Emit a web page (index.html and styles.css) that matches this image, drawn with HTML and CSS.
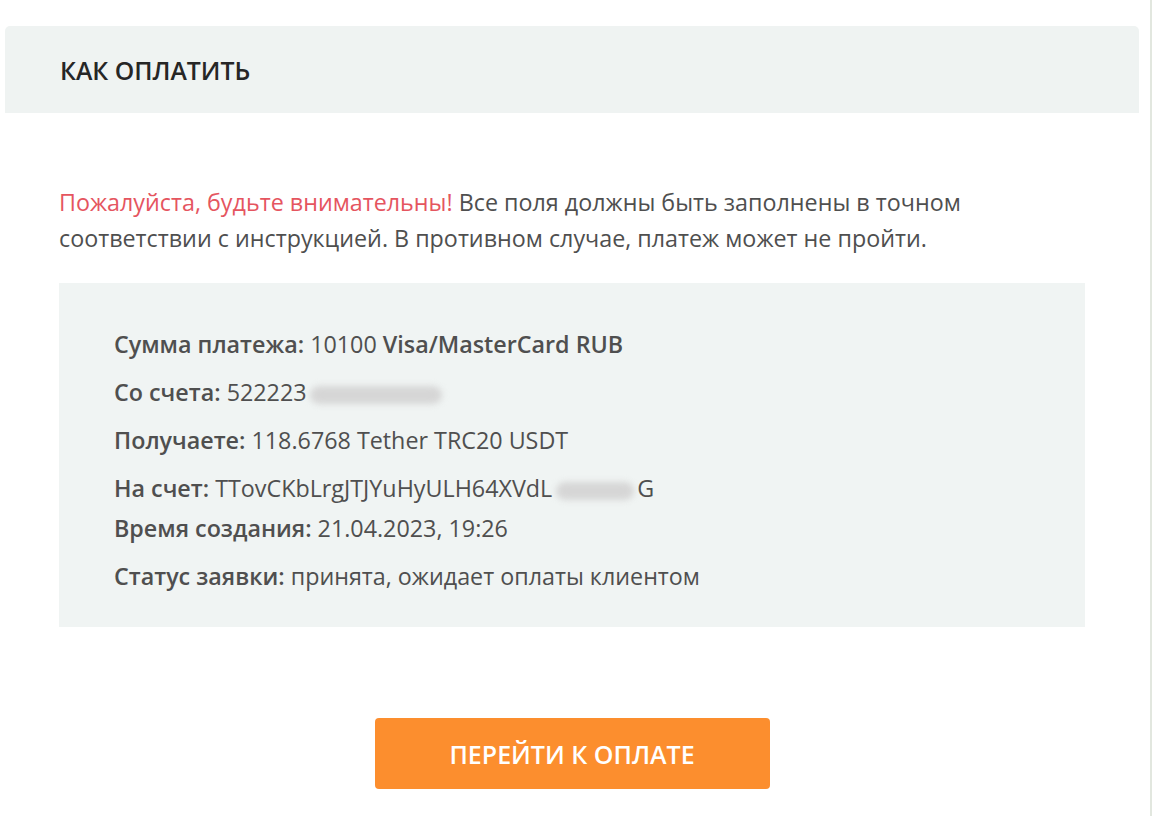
FILE: index.html
```html
<!DOCTYPE html>
<html lang="ru">
<head>
<meta charset="utf-8">
<title>Как оплатить</title>
<link rel="stylesheet" href="styles.css">
</head>
<body>
<div class="page">
  <div class="content">
    <div class="panel-head">
      <h2 class="panel-title">КАК ОПЛАТИТЬ</h2>
    </div>
    <div class="panel-body">
      <p class="notice"><span class="warn">Пожалуйста, будьте внимательны!</span> Все поля должны быть заполнены в точном соответствии с инструкцией. В противном случае, платеж может не пройти.</p>
      <div class="details">
        <p class="row"><b>Сумма платежа:</b> 10100 <b>Visa/MasterCard RUB</b></p>
        <p class="row"><b>Со счета:</b> 522223<span class="blur blur-card"></span></p>
        <p class="row"><b>Получаете:</b> 118.6768 Tether TRC20 USDT</p>
        <p class="row"><b>На счет:</b> TTovCKbLrgJTJYuHyULH64XVdL<span class="blur blur-addr"></span>G<br><b>Время создания:</b> 21.04.2023, 19:26</p>
        <p class="row"><b>Статус заявки:</b> принята, ожидает оплаты клиентом</p>
      </div>
      <div class="actions">
        <a class="pay-btn" href="#">ПЕРЕЙТИ К ОПЛАТЕ</a>
      </div>
    </div>
  </div>
</div>
</body>
</html>
```

FILE: styles.css
```css
html, body {
  margin: 0;
  padding: 0;
  background: #ffffff;
}

body {
  font-family: "Open Sans", "Noto Sans", sans-serif;
  color: #4f4f4f;
}

.page {
  width: 1150px;
  min-height: 816px;
  border-right: 2px solid #e2e7df;
  box-sizing: content-box;
}

.content {
  padding: 26px 11px 0 5px;
}

.panel-head {
  height: 87px;
  background: #eff3f2;
  border-radius: 5px 5px 0 0;
  display: flex;
  align-items: center;
  padding-left: 55px;
}

.panel-title {
  margin: 0;
  font-size: 24.8px;
  font-weight: 600;
  color: #262626;
}

.panel-body {
  padding: 0 54px;
}

.notice {
  margin: 71px 0 27px;
  font-size: 23.3px;
  line-height: 36px;
  color: #4f4f4f;
}

.warn {
  color: #e5555f;
}

.details {
  background: #f0f4f3;
  padding: 41px 55px 31px;
}

.row {
  margin: 0 0 8px;
  font-size: 23.3px;
  line-height: 40px;
  color: #4f4f4f;
}

.row:last-child {
  margin-bottom: 0;
}

.row b {
  font-weight: 600;
}

.blur {
  display: inline-block;
  height: 18px;
  vertical-align: -3px;
  background: #d6d6d6;
  border-radius: 9px;
  filter: blur(3px);
}

.blur-card {
  width: 132px;
  margin-left: 3px;
}

.blur-addr {
  width: 78px;
  margin: 0 3px 0 4px;
}

.actions {
  display: flex;
  justify-content: center;
  margin-top: 91px;
}

.pay-btn {
  display: flex;
  align-items: center;
  justify-content: center;
  width: 395px;
  height: 71px;
  background: #fc8e2e;
  border-radius: 4px;
  color: #ffffff;
  font-size: 25px;
  font-weight: 600;
  text-decoration: none;
}
```
